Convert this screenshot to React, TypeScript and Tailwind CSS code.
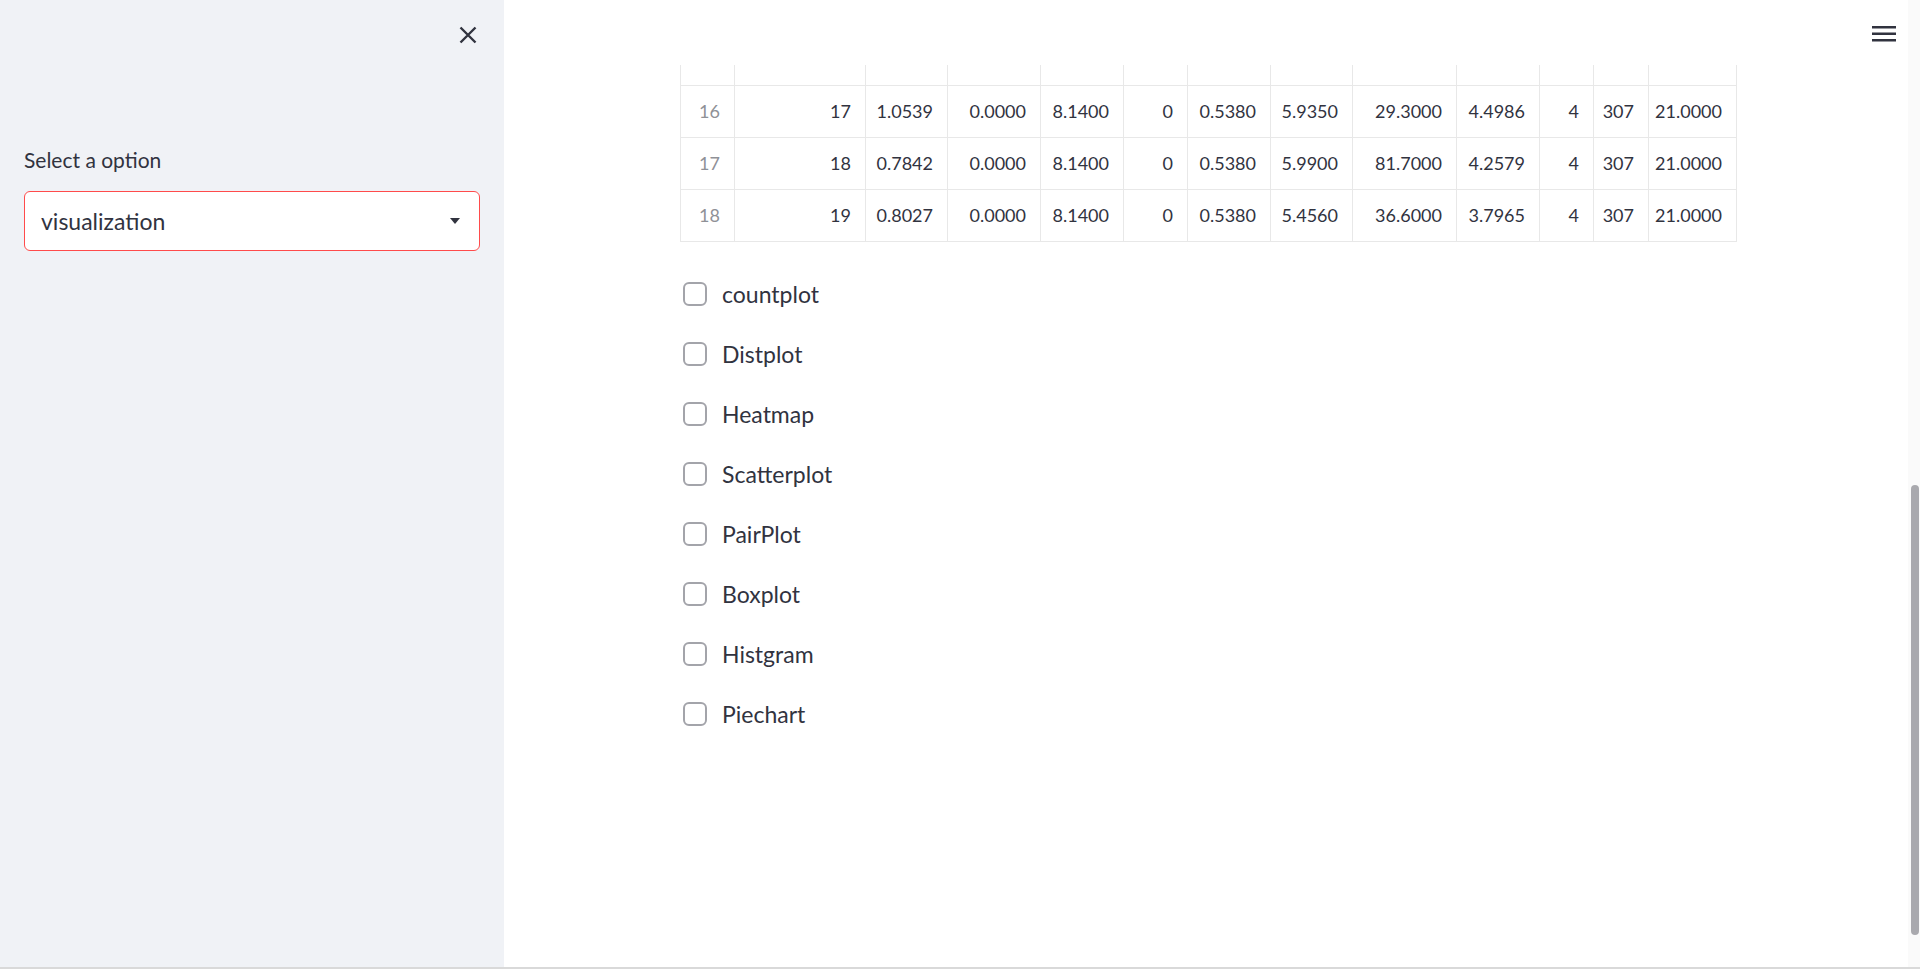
import React from "react";

const widths = [54, 131, 82, 93, 83, 64, 83, 82, 104, 83, 54, 55, 88];

const rows: string[][] = [
  ["16", "17", "1.0539", "0.0000", "8.1400", "0", "0.5380", "5.9350", "29.3000", "4.4986", "4", "307", "21.0000"],
  ["17", "18", "0.7842", "0.0000", "8.1400", "0", "0.5380", "5.9900", "81.7000", "4.2579", "4", "307", "21.0000"],
  ["18", "19", "0.8027", "0.0000", "8.1400", "0", "0.5380", "5.4560", "36.6000", "3.7965", "4", "307", "21.0000"],
];

const options = ["countplot", "Distplot", "Heatmap", "Scatterplot", "PairPlot", "Boxplot", "Histgram", "Piechart"];

function Sidebar() {
  return (
    <div className="w-[504px] h-full bg-[#f0f2f6] flex flex-col shrink-0">
      <div className="flex justify-end pt-[26px] pr-[27px]">
        <svg width="18" height="18" viewBox="0 0 18 18" className="text-[#31333f]">
          <path d="M1.5 1.5 L16.5 16.5 M16.5 1.5 L1.5 16.5" stroke="currentColor" strokeWidth="2.4" strokeLinecap="butt" />
        </svg>
      </div>
      <div className="px-[24px] mt-[103px]">
        <div className="text-[21px] leading-[25px] text-[#31333f]">Select a option</div>
        <div className="mt-[19px] w-[456px] h-[60px] bg-white border border-[#ff4b4b] rounded-[6px] flex items-center justify-between pl-[16px] pr-[19px]">
          <span className="text-[23px] text-[#31333f]">visualization</span>
          <svg width="10" height="6" viewBox="0 0 10 6">
            <path d="M0 0 L10 0 L5 6 Z" fill="#31333f" />
          </svg>
        </div>
      </div>
    </div>
  );
}

function Table() {
  return (
    <div className="w-[1057px] border-l border-[#e8e8e8] text-[18px] text-[#31333f]">
      <div className="flex h-[21px] border-b border-[#e8e8e8]">
        {widths.map((w, i) => (
          <div key={i} className="border-r border-[#e8e8e8] h-full" style={{ width: w }} />
        ))}
      </div>
      {rows.map((r, ri) => (
        <div key={ri} className="flex h-[52px] border-b border-[#e8e8e8]">
          {r.map((v, ci) => (
            <div
              key={ci}
              className={
                "border-r border-[#e8e8e8] h-full flex items-center justify-end pr-[14px] " +
                (ci === 0 ? "text-[#8f9197]" : "text-[#31333f]")
              }
              style={{ width: widths[ci] }}
            >
              {v}
            </div>
          ))}
        </div>
      ))}
    </div>
  );
}

function Checks() {
  return (
    <div className="mt-[22px] pl-[3px] flex flex-col">
      {options.map((o) => (
        <div key={o} className="h-[60px] flex items-center">
          <div className="w-[24px] h-[24px] rounded-[6px] border-[2.5px] border-[#a3a4aa] bg-white" />
          <span className="ml-[15px] text-[23px] text-[#31333f]">{o}</span>
        </div>
      ))}
    </div>
  );
}

export default function App() {
  return (
    <div className="w-[1920px] h-[969px] overflow-hidden flex flex-col bg-white font-['Lato',sans-serif]">
      <div className="flex h-[967px]">
        <Sidebar />
        <div className="flex-1 flex flex-col">
          <div className="h-[65px] flex justify-end items-start pt-[26px] pr-[12px]">
            <svg width="24" height="16" viewBox="0 0 24 16">
              <rect x="0" y="0" width="24" height="2.5" fill="#31333f" />
              <rect x="0" y="6.5" width="24" height="2.5" fill="#31333f" />
              <rect x="0" y="13" width="24" height="2.5" fill="#31333f" />
            </svg>
          </div>
          <div className="pl-[176px]">
            <Table />
            <Checks />
          </div>
        </div>
        <div className="w-[12px] h-full bg-[#fafafa] flex flex-col">
          <div className="mt-[485px] ml-[3px] w-[8px] h-[450px] rounded-full bg-[#a9a9ae]" />
        </div>
      </div>
      <div className="h-[2px] bg-[#d9d9d9]" />
    </div>
  );
}
